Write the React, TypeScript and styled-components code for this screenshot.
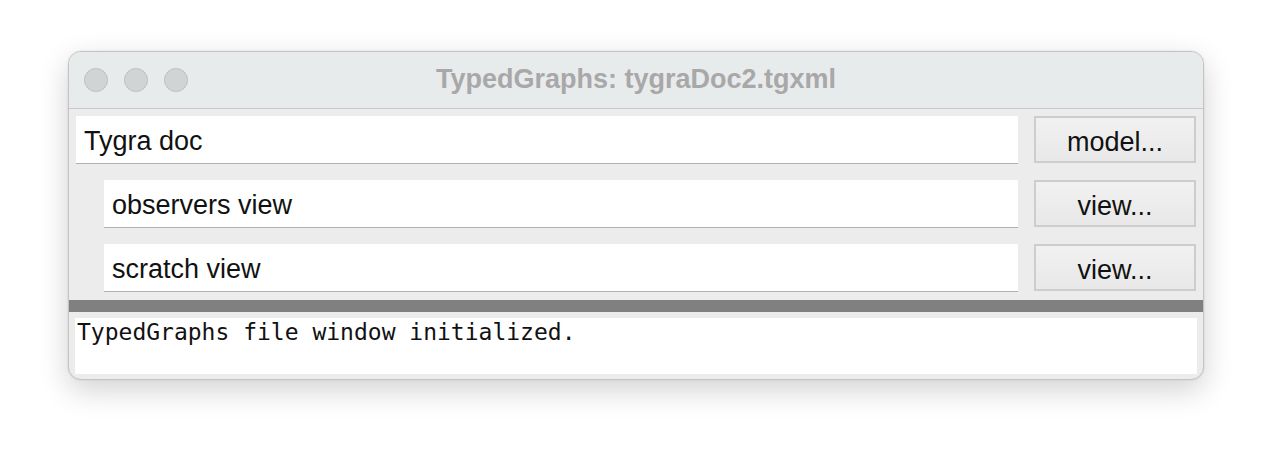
import React from "react";
import styled, { createGlobalStyle } from "styled-components";

const Global = createGlobalStyle`
  html, body { margin: 0; padding: 0; background: #ffffff; }
  body { font-family: "Liberation Sans", Arial, sans-serif; }
`;

const Page = styled.div`
  width: 1272px;
  height: 464px;
  padding: 51px 0 0 68px;
  box-sizing: border-box;
`;

const Window = styled.div`
  width: 1136px;
  height: 329px;
  box-sizing: border-box;
  border: 1px solid #c4c4c4;
  border-radius: 13px;
  background: #ececec;
  overflow: hidden;
  display: flex;
  flex-direction: column;
  box-shadow: 0 10px 30px rgba(0, 0, 0, 0.18), 0 0 2px rgba(0, 0, 0, 0.12);
`;

const TitleBar = styled.div`
  position: relative;
  height: 56px;
  flex: none;
  background: #e8ebec;
  border-bottom: 1px solid #c9c9c9;
  display: flex;
  align-items: center;
  justify-content: center;
`;

const Lights = styled.div`
  position: absolute;
  left: 15px;
  top: 16px;
  display: flex;
  gap: 16px;
`;

const Light = styled.div`
  width: 22px;
  height: 22px;
  border-radius: 50%;
  background: #d1d4d5;
  border: 1px solid #bcbfc0;
`;

const Title = styled.div`
  font-size: 27px;
  font-weight: bold;
  color: #a8a8a8;
  margin-top: -1px;
`;

const Rows = styled.div`
  display: flex;
  flex-direction: column;
  gap: 16px;
  padding: 7px 7px 0 7px;
`;

const Row = styled.div<{ $indent?: boolean }>`
  display: flex;
  gap: 16px;
  height: 48px;
  padding-left: ${(p) => (p.$indent ? "28px" : "0")};
`;

const Field = styled.div`
  flex: 1;
  background: #ffffff;
  box-shadow: 0 1px 0 #b0b0b0;
  display: flex;
  align-items: center;
  padding-left: 8px;
  padding-top: 3px;
  box-sizing: border-box;
  font-size: 27px;
  color: #111;
  height: 47px;
`;

const Button = styled.div`
  width: 162px;
  height: 47px;
  box-sizing: border-box;
  border: 2px solid #cdcdcd;
  background: linear-gradient(#f1f1f1, #e8e8e8);
  display: flex;
  align-items: center;
  justify-content: center;
  padding-top: 5px;
  font-size: 27px;
  color: #111;
`;

const Splitter = styled.div`
  height: 12px;
  background: #808080;
  margin-top: 8px;
  flex: none;
`;

const Log = styled.div`
  margin: 6px 6px 0 6px;
  height: 56px;
  background: #ffffff;
  font-family: "DejaVu Sans Mono", "Liberation Mono", monospace;
  font-size: 23px;
  color: #111;
  padding: 0 2px;
  line-height: 28px;
`;

export default function App() {
  return (
    <>
      <Global />
      <Page>
        <Window>
          <TitleBar>
            <Lights>
              <Light />
              <Light />
              <Light />
            </Lights>
            <Title>TypedGraphs: tygraDoc2.tgxml</Title>
          </TitleBar>
          <Rows>
            <Row>
              <Field>Tygra doc</Field>
              <Button>model...</Button>
            </Row>
            <Row $indent>
              <Field>observers view</Field>
              <Button>view...</Button>
            </Row>
            <Row $indent>
              <Field>scratch view</Field>
              <Button>view...</Button>
            </Row>
          </Rows>
          <Splitter />
          <Log>TypedGraphs file window initialized.</Log>
        </Window>
      </Page>
    </>
  );
}
